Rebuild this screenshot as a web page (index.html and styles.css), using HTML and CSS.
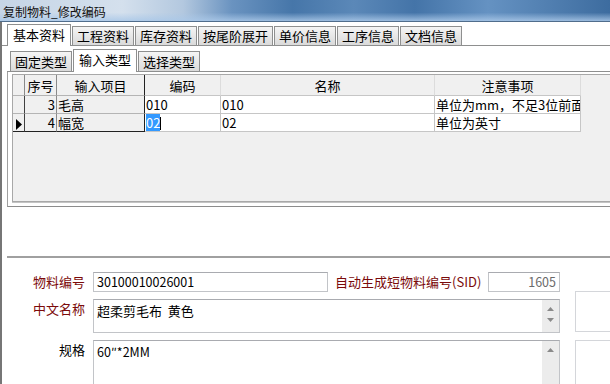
FILE: index.html
```html
<!DOCTYPE html>
<html lang="zh-CN">
<head>
    <meta charset="UTF-8">
    <meta name="viewport" content="width=device-width, initial-scale=1.0">
    <title>复制物料_修改编码</title>
    <link rel="stylesheet" href="styles.css">
</head>
<body>
    <div class="window">
        <div class="titlebar">复制物料_修改编码</div>

        <div class="content">
            <div class="tabs tabs-main">
                <span class="tab active">基本资料</span>
                <span class="tab">工程资料</span>
                <span class="tab">库存资料</span>
                <span class="tab">按尾阶展开</span>
                <span class="tab">单价信息</span>
                <span class="tab">工序信息</span>
                <span class="tab">文档信息</span>
            </div>

            <div class="page">
                <div class="tabs tabs-sub">
                    <span class="tab">固定类型</span>
                    <span class="tab active">输入类型</span>
                    <span class="tab">选择类型</span>
                </div>

                <div class="sub-page">
                    <div class="grid">
                        <table class="grid-table">
                            <colgroup>
                                <col class="c-ind">
                                <col class="c-no">
                                <col class="c-item">
                                <col class="c-code">
                                <col class="c-name">
                                <col class="c-note">
                            </colgroup>
                            <tr class="head">
                                <th class="fixed ind"></th>
                                <th class="fixed">序号</th>
                                <th class="fixed last">输入项目</th>
                                <th>编码</th>
                                <th>名称</th>
                                <th>注意事项</th>
                            </tr>
                            <tr>
                                <td class="fixed ind"></td>
                                <td class="fixed num">3</td>
                                <td class="fixed last">毛高</td>
                                <td>010</td>
                                <td>010</td>
                                <td>单位为mm，不足3位前面补0</td>
                            </tr>
                            <tr class="bottom">
                                <td class="fixed ind">
                                    <svg width="7" height="11" viewBox="0 0 7 11"><polygon points="0,0 6,5.5 0,11" fill="#000"/></svg>
                                </td>
                                <td class="fixed num">4</td>
                                <td class="fixed last">幅宽</td>
                                <td><span class="sel">02</span><span class="caret"></span></td>
                                <td>02</td>
                                <td>单位为英寸</td>
                            </tr>
                        </table>
                    </div>
                </div>

                <div class="gap"></div>
                <div class="divider"></div>

                <div class="form">
                    <div class="fields">
                        <div class="row">
                            <label class="label required">物料编号</label>
                            <div class="input code">30100010026001</div>
                            <label class="label required sid">自动生成短物料编号(SID)</label>
                            <div class="input sid-value">1605</div>
                        </div>
                        <div class="row top">
                            <label class="label required">中文名称</label>
                            <div class="textarea name">
                                <div class="text">超柔剪毛布&nbsp;&nbsp;黄色</div>
                                <div class="scroll">
                                    <svg width="7" height="4" viewBox="0 0 7 4"><polygon points="0,4 3.5,0 7,4" fill="#8a8a8a"/></svg>
                                    <svg width="7" height="4" viewBox="0 0 7 4"><polygon points="0,0 3.5,4 7,0" fill="#8a8a8a"/></svg>
                                </div>
                            </div>
                        </div>
                        <div class="row top">
                            <label class="label">规格</label>
                            <div class="textarea spec">
                                <div class="text">60″*2MM</div>
                                <div class="scroll">
                                    <svg width="7" height="4" viewBox="0 0 7 4"><polygon points="0,4 3.5,0 7,4" fill="#8a8a8a"/></svg>
                                </div>
                            </div>
                        </div>
                    </div>
                    <div class="side">
                        <div class="box first"></div>
                        <div class="box second"></div>
                    </div>
                </div>
            </div>
        </div>
    </div>
</body>
</html>
```

FILE: styles.css
```css
* {
    box-sizing: border-box;
}

body {
    margin: 0;
    font-family: "Noto Sans CJK SC", "Liberation Sans", sans-serif;
    font-size: 13px;
    color: #000;
    background: #fff;
}

.window {
    width: 610px;
    height: 384px;
    overflow: hidden;
    display: flex;
    flex-direction: column;
}

.titlebar {
    height: 24px;
    padding: 3px 0 0 3px;
    font-size: 12px;
    line-height: 18px;
    color: #101010;
    border-bottom: 1px solid #506d8c;
    background:
        linear-gradient(to bottom, rgba(255, 255, 255, 0) 60%, rgba(170, 200, 232, 0.85) 100%),
        linear-gradient(to right, #c6d5e6 0%, #d4e0ed 20%, #b3c8df 30%, #6a93c0 38%, #4676a9 48%, #5b88b8 58%, #4474a8 68%, #6592c2 80%, #3d6c9f 100%);
}

.content {
    flex: 1;
    display: flex;
    flex-direction: column;
    border-left: 2px solid #767676;
}

/* tab strips */
.tabs {
    display: flex;
    align-items: flex-end;
    border-bottom: 1px solid #8e8f8f;
}

.tab {
    border: 1px solid #8e8f8f;
    border-bottom: none;
    background: linear-gradient(#f5f5f5, #dadada);
    margin-right: 1px;
    padding: 0 4px;
    white-space: nowrap;
}

.tab.active {
    background: #fff;
    margin-bottom: -1px;
    padding: 0 5px;
}

.tabs-main {
    height: 24px;
    padding-left: 5px;
}

.tabs-main .tab {
    height: 19px;
    line-height: 18px;
}

.tabs-main .tab.active {
    height: 22px;
    line-height: 19px;
}

.page {
    flex: 1;
    display: flex;
    flex-direction: column;
    padding-left: 5px;
}

.tabs-sub {
    height: 26px;
    padding-left: 3px;
}

.tabs-sub .tab {
    height: 20px;
    line-height: 19px;
}

.tabs-sub .tab.active {
    height: 23px;
    line-height: 20px;
}

.sub-page {
    border-left: 1px solid #a0a0a0;
    border-bottom: 1px solid #8c8c8c;
    padding: 2px 0 4px 4px;
}

/* data grid */
.grid {
    height: 128px;
    background: #f0f0f0;
    border: 1px solid #a8a8a8;
    border-right: none;
    box-shadow: 0 1px 0 #c4c4c4;
}

.grid-table {
    width: 568px;
    table-layout: fixed;
    border-collapse: separate;
    border-spacing: 0;
}

.c-ind { width: 12px; }
.c-no { width: 32px; }
.c-item { width: 88px; }
.c-code { width: 76px; }
.c-name { width: 214px; }
.c-note { width: 146px; }

.grid-table th,
.grid-table td {
    padding: 0 1px;
    height: 18px;
    line-height: 17px;
    font-weight: normal;
    text-align: left;
    white-space: nowrap;
    overflow: hidden;
    border-right: 1px solid #c6c6c6;
    border-bottom: 1px solid #c6c6c6;
    background: #fff;
}

.grid-table .head th {
    height: 21px;
    line-height: 19px;
    text-align: center;
    background: #f0f0f0;
    border-right-color: #dcdcdc;
}

.grid-table .fixed,
.grid-table .head .fixed {
    background: #f0f0f0;
    border-right-color: #8a8a8a;
    border-bottom-color: #b4b4b4;
}

.grid-table .fixed.last,
.grid-table .head .fixed.last {
    border-right-color: #222;
}

.grid-table .bottom .fixed {
    border-bottom-color: #222;
}

.grid-table .ind {
    padding: 0;
    text-align: center;
    border-right-color: #404040;
}

.grid-table .ind svg {
    display: block;
    margin: 3px 0 0 3px;
}

.grid-table .num {
    text-align: right;
}

.sel {
    background: #3399ff;
    color: #fff;
}

.caret {
    display: inline-block;
    width: 1px;
    height: 13px;
    background: #000;
    vertical-align: -2px;
}

.gap {
    height: 49px;
}

.divider {
    height: 2px;
    background: #a0a0a0;
}

/* edit form */
.form {
    display: flex;
    padding-top: 14px;
}

.fields {
    display: flex;
    flex-direction: column;
    gap: 7px;
}

.row {
    display: flex;
    align-items: center;
}

.row.top {
    align-items: flex-start;
}

.label {
    width: 78px;
    margin-right: 8px;
    text-align: right;
    line-height: 18px;
}

.row.top .label {
    padding-top: 1px;
}

.label.required {
    color: #7b0a0a;
}

.label.sid {
    width: 150px;
    margin: 0 3px 0 7px;
    text-align: left;
}

.input,
.textarea {
    border: 1px solid #c2c4c8;
    border-top-color: #a9abb0;
    background: #fff;
}

.input {
    height: 20px;
    line-height: 18px;
    padding: 0 3px;
    font-size: 12.5px;
}

.input.code {
    width: 235px;
}

.input.sid-value {
    width: 72px;
    text-align: right;
    color: #6a6a6a;
}

.textarea {
    width: 467px;
    display: flex;
}

.textarea.name {
    height: 34px;
}

.textarea.spec {
    height: 60px;
}

.textarea .text {
    flex: 1;
    padding: 2px 3px;
    line-height: 17px;
}

.textarea.spec .text {
    font-size: 12.5px;
}

.scroll {
    width: 17px;
    background: #ececec;
    display: flex;
    flex-direction: column;
    align-items: center;
    padding-top: 7px;
    gap: 7px;
}

.side {
    margin-left: 15px;
    padding-top: 19px;
    width: 60px;
}

.box {
    border: 1px solid #d4d6da;
    border-right: none;
}

.box.first {
    height: 41px;
}

.box.second {
    margin-top: 8px;
    height: 60px;
}
```
